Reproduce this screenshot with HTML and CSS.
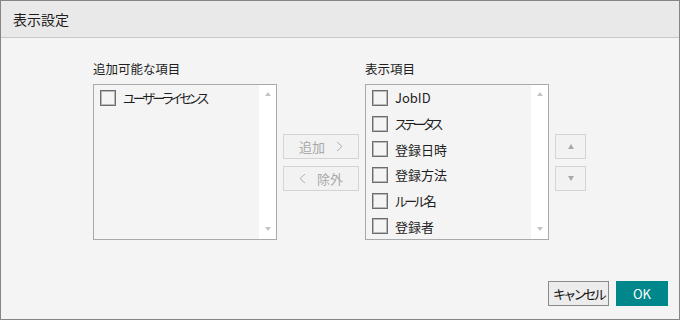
FILE: index.html
```html
<!DOCTYPE html>
<html lang="ja">
<head>
<meta charset="UTF-8" />
<title>表示設定</title>
<link rel="stylesheet" href="styles.css">
</head>
<body>
  <div class="dialog">
    <div class="dialog-header">表示設定</div>

    <div class="picker">
      <div class="col">
        <div class="col-label">追加可能な項目</div>
        <div class="listbox">
          <ul class="items">
            <li><span class="check"></span><span class="kana">ユーザーライセンス</span></li>
          </ul>
          <div class="scrollbar"><span class="arrow up"></span><span class="arrow down"></span></div>
        </div>
      </div>

      <div class="side-btns move-btns">
        <button class="btn-ghost" disabled>追加<svg class="chev" width="7" height="11" viewBox="0 0 7 11"><polyline points="1,1 6,5.5 1,10" /></svg></button>
        <button class="btn-ghost" disabled><svg class="chev" width="7" height="11" viewBox="0 0 7 11"><polyline points="6,1 1,5.5 6,10" /></svg>除外</button>
      </div>

      <div class="col">
        <div class="col-label">表示項目</div>
        <div class="listbox">
          <ul class="items">
            <li><span class="check"></span>JobID</li>
            <li><span class="check"></span><span class="kana">ステータス</span></li>
            <li><span class="check"></span>登録日時</li>
            <li><span class="check"></span>登録方法</li>
            <li><span class="check"></span><span><span class="kana">ルール</span>名</span></li>
            <li><span class="check"></span>登録者</li>
          </ul>
          <div class="scrollbar"><span class="arrow up"></span><span class="arrow down"></span></div>
        </div>
      </div>

      <div class="side-btns order-btns">
        <button class="btn-ghost" disabled><span class="tri up"></span></button>
        <button class="btn-ghost" disabled><span class="tri down"></span></button>
      </div>
    </div>

    <div class="dialog-footer">
      <button class="btn-cancel"><span class="kana">キャンセル</span></button>
      <button class="btn-ok">OK</button>
    </div>
  </div>
</body>
</html>
```

FILE: styles.css
```css
:root {
  --bg: #f4f4f4;
  --header: #e9e9e9;
  --line: #a9a9a9;
  --ghost: #d4d4d4;
  --ghost-text: #a8a8a8;
  --teal: #00878c;
  --font: "Noto Sans CJK JP", "Noto Sans", sans-serif;
}

* { box-sizing: border-box; }

body {
  margin: 0;
  font-family: var(--font);
  font-feature-settings: "palt";
  color: #1e1e1e;
}

.dialog {
  width: 680px;
  height: 320px;
  background: var(--bg);
  border: 1px solid #858585;
  display: flex;
  flex-direction: column;
}

.dialog-header {
  height: 37px;
  background: var(--header);
  border-bottom: 1px solid #c9c9c9;
  padding-left: 12px;
  font-size: 14px;
  line-height: 36px;
}

.picker {
  display: flex;
  gap: 6px;
  padding: 22px 0 0 92px;
}

.col-label {
  font-size: 12.5px;
  line-height: 18px;
  margin-bottom: 6px;
}

.listbox {
  width: 184px;
  height: 156px;
  border: 1px solid var(--line);
  display: flex;
}

.items {
  flex: 1;
  list-style: none;
  margin: 0;
  padding: 0 0 0 6px;
}

.items li {
  height: 25.7px;
  display: flex;
  align-items: center;
  gap: 7px;
  font-size: 13px;
  white-space: nowrap;
}

.kana { letter-spacing: -2.8px; }

.check {
  width: 16px;
  height: 16px;
  border: 1px solid #6c6c6c;
  box-shadow: inset 0 0 0 1px #b9b9b9;
  flex-shrink: 0;
}

.scrollbar {
  width: 17px;
  background: #fff;
  display: flex;
  flex-direction: column;
  justify-content: space-between;
  align-items: center;
  padding: 7px 0 8px;
}

.arrow {
  width: 0;
  height: 0;
  border-left: 3.5px solid transparent;
  border-right: 3.5px solid transparent;
}
.arrow.up { border-bottom: 4px solid #c3c3c3; }
.arrow.down { border-top: 4px solid #c3c3c3; }

.side-btns {
  display: flex;
  flex-direction: column;
  justify-content: center;
  gap: 7px;
  padding-top: 24px;
}

.btn-ghost {
  height: 25px;
  background: #f2f2f2;
  border: 1px solid var(--ghost);
  color: var(--ghost-text);
  font-family: var(--font);
  font-size: 13px;
  display: flex;
  align-items: center;
  justify-content: center;
  gap: 11px;
  padding: 0;
}

.move-btns .btn-ghost { width: 76px; }
.order-btns .btn-ghost { width: 31px; }

.chev {
  fill: none;
  stroke: #b0b0b0;
  stroke-width: 1;
}

.tri {
  width: 0;
  height: 0;
  border-left: 3.5px solid transparent;
  border-right: 3.5px solid transparent;
}
.tri.up { border-bottom: 5px solid #a8a8a8; }
.tri.down { border-top: 5px solid #a8a8a8; }

.dialog-footer {
  margin-top: auto;
  display: flex;
  justify-content: flex-end;
  gap: 7px;
  padding: 0 11px 13px 0;
}

.dialog-footer button {
  height: 25px;
  font-family: var(--font);
  font-size: 13px;
  padding: 0;
  white-space: nowrap;
}

.btn-cancel {
  width: 61px;
  background: #ececec;
  border: 1px solid #8a8a8a;
  color: #111;
}

.btn-ok {
  width: 52px;
  background: var(--teal);
  border: none;
  color: #fff;
  font-size: 14px;
}
```
